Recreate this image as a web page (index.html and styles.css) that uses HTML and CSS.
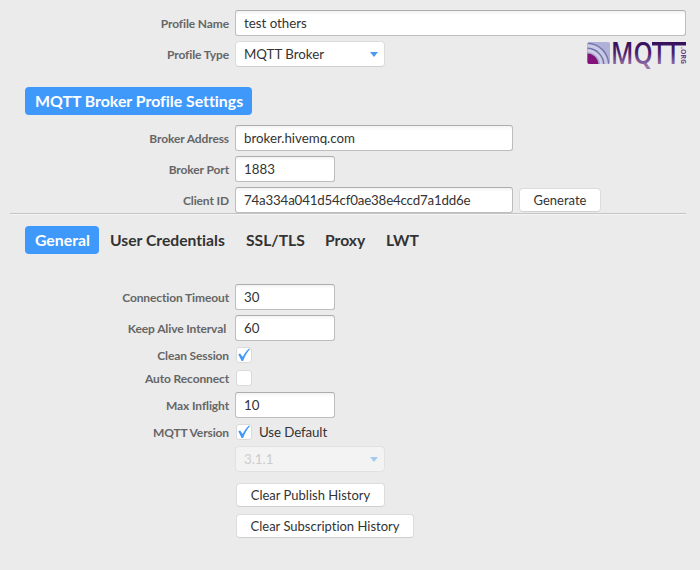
FILE: index.html
```html
<!DOCTYPE html>
<html lang="en">
<head>
<meta charset="utf-8">
<title>MQTT Broker Profile</title>
<link rel="stylesheet" href="styles.css">
</head>
<body>
<main>
  <section class="profile">
    <div class="row"><label>Profile Name</label><div class="field wide"><span>test others</span></div></div>
    <div class="row"><label>Profile Type</label><div class="select"><span class="t-type">MQTT Broker</span><i class="arrow"></i></div>
      <svg class="logo" width="102" height="28" viewBox="0 0 102 28">
        <defs>
          <linearGradient id="ink" gradientUnits="userSpaceOnUse" x1="0" y1="2" x2="0" y2="26"><stop offset="0" stop-color="#36105a"/><stop offset=".45" stop-color="#4a1f6c"/><stop offset="1" stop-color="#9877ac"/></linearGradient>
          <linearGradient id="wave" x1="0" y1="1" x2="1" y2="0"><stop offset="0" stop-color="#7776ad"/><stop offset="1" stop-color="#b4b5da"/></linearGradient>
          <clipPath id="tile"><rect x="1.5" y="2" width="22.5" height="22" rx="2"/></clipPath>
        </defs>
        <g clip-path="url(#tile)">
          <rect width="25" height="25" fill="#b0b1d8"/>
          <circle cx="1" cy="25" r="22.5" fill="#7776ad"/>
          <circle cx="1" cy="25" r="21" fill="#c9cae5"/>
          <circle cx="1" cy="25" r="17.5" fill="#7673aa"/>
          <circle cx="1" cy="25" r="16" fill="#d0cfe6"/>
          <circle cx="1" cy="25" r="13" fill="url(#wave)"/>
          <circle cx="1" cy="25" r="11.5" fill="#831279"/>
        </g>
        <g class="wordmark" fill="url(#ink)">
          <text x="25" y="23.5" textLength="69" lengthAdjust="spacingAndGlyphs">MQTT</text>
          <rect x="66" y="2" width="34" height="3.5"/>
        </g>
        <text class="org" transform="translate(94.5 7) rotate(90)" textLength="17" lengthAdjust="spacingAndGlyphs">.ORG</text>
      </svg>
    </div>
    <h1 class="pill">MQTT Broker Profile Settings</h1>
    <div class="row"><label>Broker Address</label><div class="field medium"><span>broker.hivemq.com</span></div></div>
    <div class="row"><label>Broker Port</label><div class="field short"><span>1883</span></div></div>
    <div class="row last"><label>Client ID</label><div class="field medium client"><span>74a334a041d54cf0ae38e4ccd7a1dd6e</span></div><button class="generate">Generate</button></div>
  </section>
  <nav>
    <a class="pill active">General</a><a class="cred">User Credentials</a><a class="ssl">SSL/TLS</a><a class="proxy">Proxy</a><a>LWT</a>
  </nav>
  <section class="general">
    <div class="row"><label>Connection Timeout</label><div class="field short"><span>30</span></div></div>
    <div class="row"><label class="keep">Keep Alive Interval</label><div class="field short"><span>60</span></div></div>
    <div class="row check-row"><label>Clean Session</label><i class="check"><svg width="14" height="14" viewBox="0 0 14 14"><path d="M1.3 6.2 3.1 5.6 5.7 9C7.5 5.7 9.5 3 12 .6L13 1C9.8 4.6 7.8 8.6 6.1 12.9H4.6Z"/></svg></i></div>
    <div class="row check-row"><label>Auto Reconnect</label><i class="check"></i></div>
    <div class="row"><label>Max Inflight</label><div class="field short"><span>10</span></div></div>
    <div class="row version"><label>MQTT Version</label><i class="check"><svg width="14" height="14" viewBox="0 0 14 14"><path d="M1.3 6.2 3.1 5.6 5.7 9C7.5 5.7 9.5 3 12 .6L13 1C9.8 4.6 7.8 8.6 6.1 12.9H4.6Z"/></svg></i><span class="default">Use Default</span></div>
    <div class="row"><label></label><div class="select disabled"><span>3.1.1</span><i class="arrow"></i></div></div>
    <div class="actions"><button class="publish">Clear Publish History</button><button class="subscription">Clear Subscription History</button></div>
  </section>
</main>
</body>
</html>
```
FILE: styles.css
```css
* { box-sizing: border-box; }
body { margin: 0; background: #ebebeb; color: #333; font: 13.3px/18px Lato, "Open Sans", sans-serif; font-variant-ligatures: none; }
main { width: 700px; height: 570px; overflow: hidden; }
.profile { margin: 0 14px 0 10px; padding-top: 10px; height: 214px; border-bottom: 1px solid #c4c4c4; box-shadow: 0 1px #f5f5f5; }
.row { display: flex; align-items: center; height: 26px; margin-bottom: 5px; }
label { flex: none; width: 219px; margin-right: 6px; padding-top: 1px; text-align: right; font-size: 12px; letter-spacing: -.12px; font-weight: 700; color: #666; white-space: nowrap; }
.general label { width: 229px; }
.general .keep { width: 226px; margin-right: 9px; }
.field { flex: none; height: 26px; padding: 3px 8px; border: 1px solid #bdbdbd; border-top-color: #adadad; border-radius: 3px; background: linear-gradient(#f3f3f3, #fff 4px); white-space: nowrap; }
.client { letter-spacing: -.17px; }
.wide { width: 451px; }
.medium { width: 278px; }
.short { width: 100px; }
.select { flex: none; display: flex; align-items: center; justify-content: space-between; width: 150px; height: 26px; padding: 0 6px 0 8px; border: 1px solid #dcdcdc; border-bottom-color: #d0d0d0; border-radius: 4px; background: #fff; }
.arrow { border: 4.5px solid transparent; border-top: 5px solid #4a9bf0; border-bottom: 0; }
.logo { flex: none; margin-left: 201px; overflow: visible; }
.wordmark { font: 600 30px "Open Sans", sans-serif; }
.org { font: 700 7px "Open Sans", sans-serif; fill: #6b4283; }
.pill { display: block; width: 227px; height: 28px; margin: 0; padding: 0 10px; border-radius: 4px; background: #3f99fb; color: #fff; font-size: 15.85px; line-height: 28px; font-weight: 700; white-space: nowrap; }
h1.pill { margin: 20px 0 10px 15px; }
button { height: 24px; padding: 0; border: 1px solid #dcdcdc; border-bottom-color: #cfcfcf; border-radius: 4px; background: #fff; color: #333; font: 13px/20px Lato, sans-serif; font-variant-ligatures: none; white-space: nowrap; }
.generate { width: 82px; margin-left: 6px; }
nav { display: flex; margin: 12px 0 0 25px; height: 28px; font-size: 15.7px; line-height: 28px; font-weight: 700; }
nav .active { width: 74px; margin-right: 11px; font-size: 15.8px; }
.cred { width: 136px; }
.ssl { width: 79px; }
.proxy { width: 61px; }
.general { padding-top: 30px; }
.check-row { height: 18px; }
.check { flex: none; width: 16px; height: 16px; margin-left: 1px; border: 1px solid #dadada; border-radius: 3px; background: #fff; }
.check svg { display: block; fill: #3f99fb; }
.version { height: 18px; }
.default { margin-left: 7px; letter-spacing: -.1px; }
.disabled { background: #f3f3f3; border-color: #e1e1e1; color: #ccc; }
.disabled .arrow { border-top-color: #a5cbf1; }
.actions { display: flex; flex-direction: column; gap: 7px; padding: 6px 0 0 236px; }
.publish { width: 149px; }
.subscription { width: 178px; }
```
